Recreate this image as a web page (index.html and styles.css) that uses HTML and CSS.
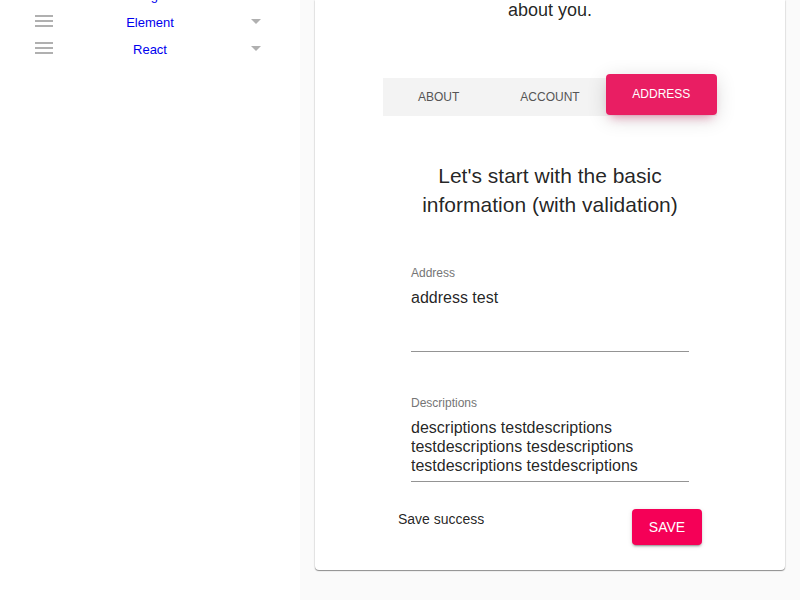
FILE: index.html
```html
<!DOCTYPE html>
<html lang="en">
<head>
<meta charset="utf-8">
<meta name="viewport" content="width=device-width, initial-scale=1">
<title>Profile wizard</title>
<link rel="stylesheet" href="styles.css">
</head>
<body>
<div class="app">
  <nav class="sidebar">
    <ul class="menu">
      <li class="menu-item">
        <svg class="icon" viewBox="0 0 24 24"><path d="M3 18h18v-2H3v2zm0-5h18v-2H3v2zm0-7v2h18V6H3z"/></svg>
        <a class="menu-link" href="#">Plugin</a>
        <svg class="icon" viewBox="0 0 24 24"><path d="M7 10l5 5 5-5z"/></svg>
      </li>
      <li class="menu-item">
        <svg class="icon" viewBox="0 0 24 24"><path d="M3 18h18v-2H3v2zm0-5h18v-2H3v2zm0-7v2h18V6H3z"/></svg>
        <a class="menu-link" href="#">Element</a>
        <svg class="icon" viewBox="0 0 24 24"><path d="M7 10l5 5 5-5z"/></svg>
      </li>
      <li class="menu-item">
        <svg class="icon" viewBox="0 0 24 24"><path d="M3 18h18v-2H3v2zm0-5h18v-2H3v2zm0-7v2h18V6H3z"/></svg>
        <a class="menu-link" href="#">React</a>
        <svg class="icon" viewBox="0 0 24 24"><path d="M7 10l5 5 5-5z"/></svg>
      </li>
    </ul>
  </nav>
  <main class="content">
    <section class="card">
      <p class="intro">about you.</p>
      <div class="tabs" role="tablist">
        <button class="tab" type="button" role="tab">ABOUT</button>
        <button class="tab" type="button" role="tab">ACCOUNT</button>
        <button class="tab tab-active" type="button" role="tab" aria-selected="true">ADDRESS</button>
      </div>
      <form class="form">
        <h2 class="title">Let's start with the basic information (with validation)</h2>
        <div class="field">
          <label class="label" for="address">Address</label>
          <textarea class="input" id="address" rows="3">address test</textarea>
        </div>
        <div class="field">
          <label class="label" for="descriptions">Descriptions</label>
          <textarea class="input" id="descriptions" rows="3">descriptions testdescriptions testdescriptions tesdescriptions testdescriptions testdescriptions</textarea>
        </div>
        <div class="actions">
          <p class="status">Save success</p>
          <button class="save" type="button">SAVE</button>
        </div>
      </form>
    </section>
  </main>
</div>
</body>
</html>
```
FILE: styles.css
```css
* {
  box-sizing: border-box;
}

body {
  margin: 0;
  background: #fafafa;
  color: rgba(0, 0, 0, 0.87);
  font-family: "Liberation Sans", Arial, sans-serif;
  font-size: 14px;
}

button,
textarea {
  font-family: inherit;
}

.app {
  display: grid;
  grid-template-columns: 300px 1fr;
  min-height: 100vh;
}

.sidebar {
  background: #fff;
  padding: 0 32px;
}

.menu {
  list-style: none;
  margin: -20px 0 0;
  padding: 0;
}

.menu-item {
  display: flex;
  align-items: center;
  height: 27px;
}

.icon {
  flex: none;
  width: 24px;
  height: 24px;
  fill: #b0b0b0;
}

.menu-link {
  flex: 1;
  padding-top: 3px;
  color: #0000ee;
  font-size: 13px;
  text-align: center;
  text-decoration: none;
}

.content {
  padding: 0 15px 30px;
}

.card {
  padding: 0 68px 25px;
  background: #fff;
  border-radius: 0 0 4px 4px;
  box-shadow: 0 1px 1px rgba(0, 0, 0, 0.4), 0 0 2px rgba(0, 0, 0, 0.2);
}

.intro {
  margin: 0;
  padding-bottom: 57px;
  font-size: 18px;
  line-height: 21px;
  text-align: center;
}

.tabs {
  display: grid;
  grid-template-columns: repeat(3, 1fr);
  height: 38px;
  background: #f3f3f3;
}

.tab {
  padding: 0;
  border: 0;
  background: none;
  color: #555;
  font-size: 12px;
}

.tab-active {
  height: 41px;
  margin-top: -4px;
  padding-bottom: 2px;
  border-radius: 4px;
  background: #e91e63;
  color: #fff;
  box-shadow: 0 4px 20px rgba(0, 0, 0, 0.14), 0 7px 10px -5px rgba(233, 30, 99, 0.4);
}

.form {
  padding: 45px 15px 0;
}

.title {
  margin: 0 13px 46px;
  font-size: 21px;
  font-weight: 400;
  line-height: 29px;
  text-align: center;
}

.field {
  margin: 0 13px 43px;
}

.label {
  display: block;
  margin-bottom: 7px;
  color: #757575;
  font-size: 12px;
  line-height: 16px;
}

.input {
  display: block;
  width: 100%;
  height: 64px;
  padding: 0;
  overflow: hidden;
  border: 0;
  border-bottom: 1px solid #949494;
  background: none;
  color: inherit;
  font-size: 16px;
  line-height: 19px;
  resize: none;
}

.actions {
  display: flex;
  justify-content: space-between;
  margin-top: -16px;
}

.status {
  margin: 0;
  line-height: 20px;
}

.save {
  width: 70px;
  height: 36px;
  padding: 0;
  border: 0;
  border-radius: 4px;
  background: #f50057;
  color: #fff;
  font-size: 14px;
  box-shadow: 0 3px 1px -2px rgba(0, 0, 0, 0.2), 0 2px 2px rgba(0, 0, 0, 0.14), 0 1px 5px rgba(0, 0, 0, 0.12);
}
```
